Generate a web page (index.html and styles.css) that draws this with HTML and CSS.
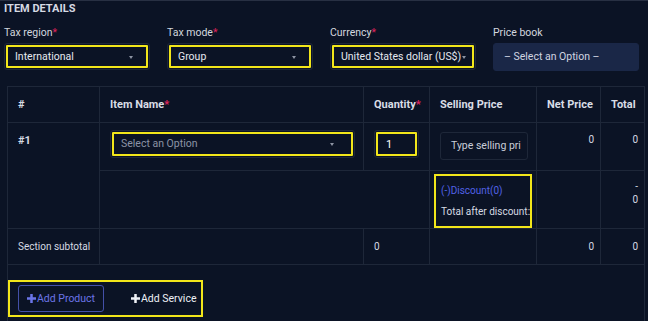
FILE: index.html
```html
<!DOCTYPE html>
<html lang="en">
<head>
    <meta charset="UTF-8">
    <title>Item Details</title>
    <link rel="stylesheet" href="styles.css">
</head>
<body>
    <div class="item-details">
        <h3 class="section-title">ITEM DETAILS</h3>

        <div class="filters">
            <div class="field">
                <label>Tax region<span class="req">*</span></label>
                <div class="select marked">International<span class="caret"></span></div>
            </div>
            <div class="field">
                <label>Tax mode<span class="req">*</span></label>
                <div class="select marked">Group<span class="caret"></span></div>
            </div>
            <div class="field">
                <label>Currency<span class="req">*</span></label>
                <div class="select marked">United States dollar (US$)<span class="caret tight"></span></div>
            </div>
            <div class="field">
                <label>Price book</label>
                <div class="select filled">– Select an Option –</div>
            </div>
        </div>

        <table class="items">
            <colgroup>
                <col style="width:92px">
                <col style="width:264px">
                <col style="width:66px">
                <col style="width:107px">
                <col style="width:64px">
                <col style="width:44px">
            </colgroup>
            <thead>
                <tr>
                    <th>#</th>
                    <th>Item Name<span class="req">*</span></th>
                    <th>Quantity<span class="req">*</span></th>
                    <th>Selling Price</th>
                    <th>Net Price</th>
                    <th>Total</th>
                </tr>
            </thead>
            <tbody>
                <tr class="item-row">
                    <td rowspan="2" class="strong">#1</td>
                    <td><div class="select wide marked placeholder">Select an Option<span class="caret"></span></div></td>
                    <td><div class="qty marked">1</div></td>
                    <td><div class="price-input">Type selling pri</div></td>
                    <td class="num">0</td>
                    <td class="num">0</td>
                </tr>
                <tr class="discount-row">
                    <td colspan="2"></td>
                    <td>
                        <div class="discount">
                            <div class="discount-link">(-)Discount(0)</div>
                            <div>Total after discount:</div>
                        </div>
                    </td>
                    <td></td>
                    <td class="num"><div>-</div><div>0</div></td>
                </tr>
                <tr class="subtotal-row">
                    <td>Section subtotal</td>
                    <td></td>
                    <td>0</td>
                    <td></td>
                    <td class="num">0</td>
                    <td class="num">0</td>
                </tr>
                <tr class="footer-row">
                    <td colspan="6">
                        <div class="add-actions">
                            <button class="btn-add product">
                                <svg width="9" height="9" viewBox="0 0 10 10"><path d="M5 0v10M0 5h10" stroke="currentColor" stroke-width="2.8"/></svg>Add Product
                            </button>
                            <button class="btn-add service">
                                <svg width="9" height="9" viewBox="0 0 10 10"><path d="M5 0v10M0 5h10" stroke="currentColor" stroke-width="2.8"/></svg>Add Service
                            </button>
                        </div>
                    </td>
                </tr>
            </tbody>
        </table>
    </div>
</body>
</html>
```

FILE: styles.css
```css
:root {
    --bg: #0b1325;
    --line: #1e2739;
    --text: #d6dae3;
    --muted: #8b93a6;
    --req: #e0245e;
    --mark: #f2e61a;
    --accent: #5262e6;
}

* {
    margin: 0;
    padding: 0;
    box-sizing: border-box;
    font-family: Roboto, "Liberation Sans", sans-serif;
}

body {
    background: var(--bg);
    color: var(--text);
    font-size: 10px;
    height: 321px;
    overflow: hidden;
}

.item-details {
    border-top: 1px solid #283043;
    padding: 1px 0 0 4px;
}

.section-title {
    font-size: 11px;
    font-weight: 700;
    line-height: 13px;
    color: var(--text);
}

.req {
    color: var(--req);
}

.filters {
    display: grid;
    grid-template-columns: repeat(4, 146px);
    column-gap: 17px;
    margin-top: 11px;
}

.field label {
    display: block;
    font-size: 10.5px;
    line-height: 13px;
    margin-bottom: 4px;
    color: #d3d7df;
}

.select {
    position: relative;
    height: 27px;
    line-height: 25px;
    padding: 0 10px;
    border: 1px solid var(--line);
    border-radius: 3px;
    font-size: 10.5px;
    color: #e6e9f0;
    white-space: nowrap;
    overflow: hidden;
}

.marked {
    outline: 2px solid var(--mark);
    outline-offset: -4px;
}

.caret {
    position: absolute;
    right: 16px;
    top: 12px;
    border-left: 2.5px solid transparent;
    border-right: 2.5px solid transparent;
    border-top: 3px solid #8d94a3;
}

.caret.tight {
    right: 9px;
}

.select.filled {
    background: #1a2747;
    border-color: #1a2747;
    height: 28px;
    line-height: 26px;
    color: #d0d5e1;
}

.items {
    margin: 15px 0 0 3px;
    width: 637px;
    table-layout: fixed;
    border-collapse: collapse;
    border: 1px solid var(--line);
}

.items th,
.items td {
    border: 1px solid var(--line);
    text-align: left;
    vertical-align: top;
    padding: 0 6px 0 10px;
    white-space: nowrap;
}

.items th {
    height: 36px;
    vertical-align: middle;
    font-size: 11px;
    font-weight: 700;
    color: #d9dde6;
}

.items .strong {
    font-weight: 700;
    font-size: 11px;
}

.items .num {
    text-align: right;
}

.item-row td {
    height: 48px;
    padding-top: 11px;
}

.item-row td:has(.select),
.item-row td:has(.qty),
.item-row td:has(.price-input) {
    padding-top: 7px;
}

.select.wide {
    width: 245px;
    height: 28px;
    line-height: 26px;
}

.select.placeholder {
    color: var(--muted);
}

.select.wide .caret {
    top: 12px;
    right: 20px;
}

.qty {
    width: 45px;
    height: 28px;
    line-height: 28px;
    padding-left: 11px;
    border: 1px solid var(--line);
    border-radius: 3px;
    font-size: 11px;
    color: #fff;
}

.price-input {
    width: 88px;
    height: 28px;
    line-height: 26px;
    padding-left: 10px;
    margin-top: 2px;
    border: 1px solid var(--line);
    border-radius: 3px;
    font-size: 10.5px;
    color: #c9ced9;
    overflow: hidden;
}

.discount-row td {
    height: 56px;
    padding-top: 3px;
}

.discount-row td:has(.discount) {
    padding: 3px 4px 0 4px;
}

.discount {
    border: 2px solid var(--mark);
    padding: 4px 0 4px 5px;
    line-height: 21px;
    overflow: hidden;
}

.discount-link {
    color: var(--accent);
}

.discount-row .num {
    padding-top: 9px;
    line-height: 13px;
}

.subtotal-row td {
    height: 36px;
    vertical-align: middle;
}

.footer-row td {
    height: 62px;
    padding: 15px 0 0 0;
}

.add-actions {
    display: flex;
    align-items: center;
    gap: 27px;
    width: 195px;
    height: 37px;
    padding-left: 8px;
    border: 2px solid var(--mark);
}

.btn-add {
    display: flex;
    align-items: center;
    gap: 1px;
    background: none;
    border: none;
    font-size: 10.5px;
    white-space: nowrap;
    cursor: pointer;
}

.btn-add.product {
    height: 27px;
    padding: 0 8px;
    border: 1px solid #4350a8;
    border-radius: 3px;
    color: #6b75e8;
}

.btn-add.service {
    color: #eef0f5;
}
```
